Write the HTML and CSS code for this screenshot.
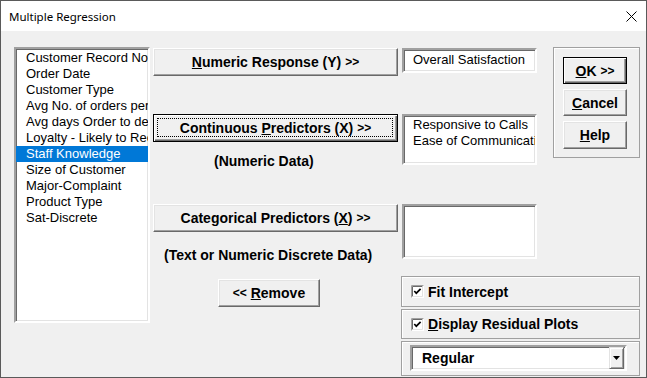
FILE: index.html
```html
<!DOCTYPE html>
<html>
<head>
<meta charset="utf-8">
<title>Multiple Regression</title>
<link rel="stylesheet" href="styles.css">
</head>
<body>
<div class="window">
  <div class="titlebar">
    <span class="title">Multiple Regression</span>
    <svg class="close" width="11" height="11" viewBox="0 0 11 11"><path d="M0.5 0.5 L10.5 10.5 M10.5 0.5 L0.5 10.5" stroke="#000" stroke-width="1" fill="none"/></svg>
  </div>
  <div class="client">
    <div class="list sunken">
      <div class="item">Customer Record No</div>
      <div class="item">Order Date</div>
      <div class="item">Customer Type</div>
      <div class="item">Avg No. of orders per month</div>
      <div class="item">Avg days Order to delivery</div>
      <div class="item">Loyalty - Likely to Recommend</div>
      <div class="item selected">Staff Knowledge</div>
      <div class="item">Size of Customer</div>
      <div class="item">Major-Complaint</div>
      <div class="item">Product Type</div>
      <div class="item">Sat-Discrete</div>
    </div>

    <div class="middle">
      <div class="btn btn-numeric"><span><u>N</u>umeric Response (Y) <span class="chev">&gt;&gt;</span></span></div>
      <div class="btn btn-continuous focus"><span>Continuous <u>P</u>redictors (X) <span class="chev">&gt;&gt;</span></span></div>
      <div class="label label-numeric">(Numeric Data)</div>
      <div class="btn btn-categorical"><span>Categorical Predictors (<u>X</u>) <span class="chev">&gt;&gt;</span></span></div>
      <div class="label label-text">(Text or Numeric Discrete Data)</div>
      <div class="btn btn-remove"><span><span class="chev">&lt;&lt;</span> <u>R</u>emove</span></div>
    </div>

    <div class="right">
      <div class="right-top">
        <div class="boxes">
          <div class="box box1 sunken"><div class="item">Overall Satisfaction</div></div>
          <div class="box box2 sunken">
            <div class="item">Responsive to Calls</div>
            <div class="item">Ease of Communication</div>
          </div>
          <div class="box box3 sunken"></div>
        </div>
        <div class="cmdframe frame">
          <div class="btn cmd default"><span><u>O</u>K <span class="chev">&gt;&gt;</span></span></div>
          <div class="btn cmd"><span><u>C</u>ancel</span></div>
          <div class="btn cmd"><span><u>H</u>elp</span></div>
        </div>
      </div>
      <div class="frame optframe opt-fit">
        <svg class="check" width="13" height="13" viewBox="0 0 13 13">
          <rect x="0" y="0" width="13" height="13" fill="#fff"/>
          <path d="M0.5 12.5 V0.5 H12.5" stroke="#a0a0a0" fill="none"/>
          <path d="M1.5 11.5 V1.5 H11.5" stroke="#696969" fill="none"/>
          <path d="M1.5 11.5 H11.5 V1.5" stroke="#e3e3e3" fill="none"/>
          <path d="M3.3 6 L5.3 8.2 L9.6 3.8" stroke="#000" stroke-width="1.7" fill="none"/>
        </svg>
        <span class="optlabel">Fit Intercept</span>
      </div>
      <div class="frame optframe opt-display">
        <svg class="check" width="13" height="13" viewBox="0 0 13 13">
          <rect x="0" y="0" width="13" height="13" fill="#fff"/>
          <path d="M0.5 12.5 V0.5 H12.5" stroke="#a0a0a0" fill="none"/>
          <path d="M1.5 11.5 V1.5 H11.5" stroke="#696969" fill="none"/>
          <path d="M1.5 11.5 H11.5 V1.5" stroke="#e3e3e3" fill="none"/>
          <path d="M3.3 6 L5.3 8.2 L9.6 3.8" stroke="#000" stroke-width="1.7" fill="none"/>
        </svg>
        <span class="optlabel"><u>D</u>isplay Residual Plots</span>
      </div>
      <div class="frame dropframe">
        <div class="combo sunken">
          <span class="combo-text">Regular</span>
          <div class="combo-btn">
            <svg width="7" height="4" viewBox="0 0 7 4"><path d="M0 0 H7 L3.5 4 Z" fill="#000"/></svg>
          </div>
        </div>
      </div>
    </div>
  </div>
</div>
</body>
</html>
```

FILE: styles.css
```css
* { box-sizing: border-box; }

html, body {
  margin: 0;
  padding: 0;
  background: #f0f0f0;
}

.window {
  width: 647px;
  height: 378px;
  border: 1px solid #5a5a5a;
  background: #f0f0f0;
  display: flex;
  flex-direction: column;
  font-family: "Liberation Sans", Arial, sans-serif;
  font-size: 13px;
  color: #000;
}

.titlebar {
  height: 30px;
  background: #fff;
  display: flex;
  align-items: center;
  justify-content: space-between;
  padding: 0 9px 0 8px;
  flex: none;
}

.title {
  font-family: "Noto Sans", "Open Sans", sans-serif;
  font-size: 11.5px;
  padding-top: 1px;
}

.close {
  display: block;
}

.client {
  flex: 1;
  display: flex;
  align-items: flex-start;
  padding: 16px 0 0 13px;
}

.sunken {
  background: #fff;
  border: 2px solid;
  border-color: #a0a0a0 #fff #fff #a0a0a0;
  box-shadow: inset 1px 1px 0 #696969, inset -1px -1px 0 #e3e3e3;
}

.list {
  width: 136px;
  height: 276px;
  padding-top: 1px;
  overflow: hidden;
}

.item {
  height: 16px;
  line-height: 16px;
  padding-left: 10px;
  white-space: nowrap;
  overflow: hidden;
}

.item.selected {
  background: #0078d7;
  color: #fff;
}

.middle {
  width: 245px;
  margin-left: 3px;
  display: flex;
  flex-direction: column;
}

.btn {
  height: 28px;
  background: #f0f0f0;
  border: 1px solid;
  border-color: #fff #696969 #696969 #fff;
  box-shadow: inset -1px -1px 0 #a0a0a0, inset 1px 1px 0 #e3e3e3;
  display: flex;
  align-items: center;
  justify-content: center;
  font-weight: bold;
  font-size: 14px;
  white-space: nowrap;
  position: relative;
}

.chev {
  font-size: 12px;
  font-weight: bold;
  position: relative;
  top: -1px;
}

.btn.focus,
.btn.default {
  border-color: #000;
  box-shadow: inset 1px 1px 0 #fff, inset -1px -1px 0 #696969, inset -2px -2px 0 #a0a0a0;
}

.btn.focus::after {
  content: "";
  position: absolute;
  left: 3px;
  top: 3px;
  right: 4px;
  bottom: 4px;
  border: 1px dotted #000;
  pointer-events: none;
}

.btn-numeric { margin-top: 1px; }
.btn-continuous { margin-top: 38px; }
.btn-categorical { margin-top: 35px; }
.btn-remove {
  margin-top: 16px;
  margin-left: 65px;
  width: 102px;
}

.label {
  height: 16px;
  line-height: 16px;
  font-weight: bold;
  font-size: 14px;
  white-space: nowrap;
}

.label-numeric {
  margin-top: 11px;
  padding-left: 61px;
}

.label-text {
  margin-top: 15px;
  padding-left: 11px;
}

.right {
  width: 239px;
  margin-left: 3px;
  display: flex;
  flex-direction: column;
}

.right-top {
  height: 229px;
  display: flex;
  align-items: flex-start;
}

.boxes {
  width: 135px;
  margin-left: 1px;
  display: flex;
  flex-direction: column;
}

.box { overflow: hidden; padding-top: 1px; }
.box .item { padding-left: 9px; }
.box1 { margin-top: 1px; height: 25px; padding-top: 2px; }
.box2 { margin-top: 41px; height: 51px; }
.box3 { margin-top: 39px; height: 55px; }

.frame {
  border: 1px solid #a0a0a0;
  box-shadow: inset 1px 1px 0 #fff;
}

.cmdframe {
  margin-left: 16px;
  width: 87px;
  height: 111px;
  padding: 9px 0 0 9px;
  display: flex;
  flex-direction: column;
  gap: 5px;
}

.cmd {
  width: 64px;
  height: 27px;
}

.cmd:last-child { height: 28px; }

.optframe {
  display: flex;
  align-items: center;
  padding-left: 9px;
}

.opt-fit { height: 31px; }
.opt-display { height: 30px; margin-top: 2px; }

.check {
  display: block;
  flex: none;
}

.optlabel {
  margin-left: 4px;
  font-weight: bold;
  font-size: 14px;
  white-space: nowrap;
}

.dropframe {
  margin-top: 2px;
  height: 35px;
  padding: 3px 0 0 8px;
}

.combo {
  width: 217px;
  height: 26px;
  display: flex;
  align-items: center;
  justify-content: space-between;
  padding: 0 1px 0 10px;
}

.combo-text {
  font-weight: bold;
  font-size: 14px;
}

.combo-btn {
  width: 15px;
  height: 22px;
  background: #f0f0f0;
  border: 1px solid;
  border-color: #e3e3e3 #696969 #696969 #e3e3e3;
  box-shadow: inset 1px 1px 0 #fff, inset -1px -1px 0 #a0a0a0;
  display: flex;
  align-items: center;
  justify-content: center;
}

.combo-btn svg { display: block; }
```
